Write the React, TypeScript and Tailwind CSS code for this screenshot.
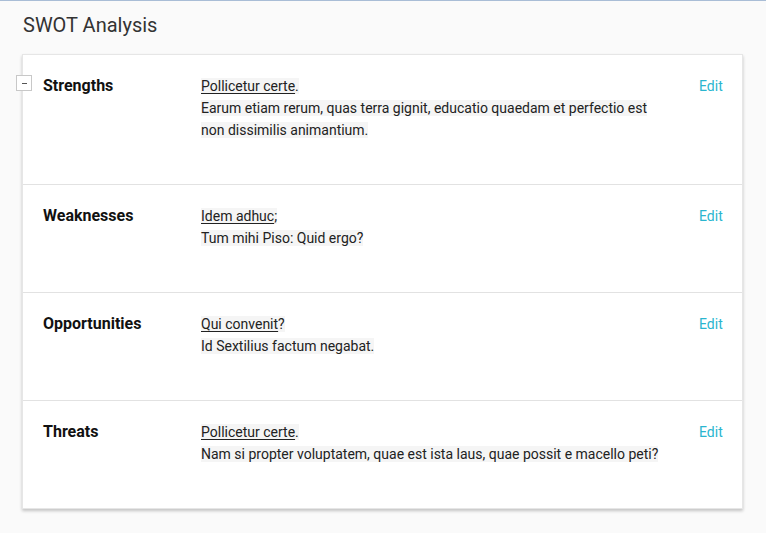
import React from 'react'

type Item = { label: string; link: string; punct: string; text: string }

const items: Item[] = [
  { label: 'Strengths', link: 'Pollicetur certe', punct: '.', text: 'Earum etiam rerum, quas terra gignit, educatio quaedam et perfectio est non dissimilis animantium.' },
  { label: 'Weaknesses', link: 'Idem adhuc', punct: ';', text: 'Tum mihi Piso: Quid ergo?' },
  { label: 'Opportunities', link: 'Qui convenit', punct: '?', text: 'Id Sextilius factum negabat.' },
  { label: 'Threats', link: 'Pollicetur certe', punct: '.', text: 'Nam si propter voluptatem, quae est ista laus, quae possit e macello peti?' },
]

export default function App() {
  return (
    <div className="min-h-[533px] border-t border-[#a9bdd6] bg-[#fafafa] pl-[22px] pb-6 font-['Roboto',sans-serif] text-[#222]">
      <h1 className="pl-px pt-[11px] pb-[16px] text-[20px] leading-[26px] text-[#333]">SWOT Analysis</h1>
      <div className="relative w-[721px] border border-[#e6e6e6] bg-white shadow-[0_2px_3px_rgba(0,0,0,0.22)]">
        <button className="absolute left-[-7px] top-[20px] flex h-[16px] w-[16px] items-center justify-center border border-[#c8c8c8] bg-white">
          <span className="block h-[1px] w-[5px] bg-[#555]" />
        </button>
        {items.map((it, i) => (
          <div key={it.label} className={`flex pl-5 pr-5 pt-[20px] pb-[43px] ${i > 0 ? 'border-t border-[#e2e2e2]' : ''}`}>
            <div className="w-[158px] shrink-0 text-[16px] font-bold leading-[22px] text-[#111]">{it.label}</div>
            <div className="w-[466px] shrink-0 text-[14px] leading-[22px]">
              <span className="bg-[#f5f5f5]"><span className="underline underline-offset-2">{it.link}</span>{it.punct}</span>
              <br />
              <span className="bg-[#f5f5f5] [box-decoration-break:clone]">{it.text}</span>
            </div>
            <div className="flex-1 pl-[32px] text-[14px] leading-[22px] text-[#2ab5cf]">
              <a href="#">Edit</a>
            </div>
          </div>
        ))}
      </div>
    </div>
  )
}
